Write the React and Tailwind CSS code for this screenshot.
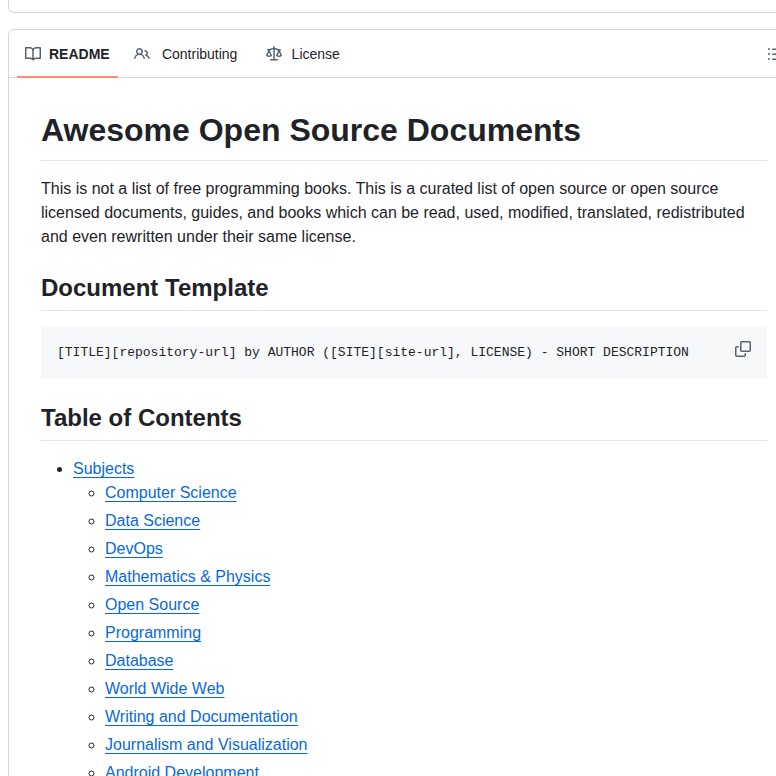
import React, { useState } from "react";
import clsx from "clsx";

const icons = {
  book: "M0 1.75A.75.75 0 0 1 .75 1h4.253c1.227 0 2.317.59 3 1.501A3.743 3.743 0 0 1 11.006 1h4.245a.75.75 0 0 1 .75.75v10.5a.75.75 0 0 1-.75.75h-4.507a2.25 2.25 0 0 0-1.591.659l-.622.621a.75.75 0 0 1-1.06 0l-.622-.621A2.25 2.25 0 0 0 5.258 13H.75a.75.75 0 0 1-.75-.75Zm7.251 10.324.004-5.073-.002-2.253A2.25 2.25 0 0 0 5.003 2.5H1.5v9h3.757a3.75 3.75 0 0 1 1.994.574ZM8.755 4.75l-.004 7.322a3.752 3.752 0 0 1 1.992-.572H14.5v-9h-3.495a2.25 2.25 0 0 0-2.25 2.25Z",
  people: "M2 5.5a3.5 3.5 0 1 1 5.898 2.549 5.508 5.508 0 0 1 3.034 4.084.75.75 0 1 1-1.482.235 4 4 0 0 0-7.9 0 .75.75 0 0 1-1.482-.236A5.507 5.507 0 0 1 3.102 8.05 3.493 3.493 0 0 1 2 5.5ZM11 4a3.001 3.001 0 0 1 2.22 5.018 5.01 5.01 0 0 1 2.56 3.012.749.749 0 0 1-.885.954.752.752 0 0 1-.549-.514 3.507 3.507 0 0 0-2.522-2.372.75.75 0 0 1-.574-.73v-.352a.75.75 0 0 1 .416-.672A1.5 1.5 0 0 0 11 5.5.75.75 0 0 1 11 4Zm-5.5-.5a2 2 0 1 0-.001 3.999A2 2 0 0 0 5.5 3.5Z",
  law: "M8.75.75V2h.985c.304 0 .603.08.867.231l1.29.736c.038.022.08.033.124.033h2.234a.75.75 0 0 1 0 1.5h-.427l2.111 4.692a.75.75 0 0 1-.154.838l-.53-.53.529.531-.001.002-.002.002-.006.006-.006.005-.01.01-.045.04c-.21.176-.441.327-.686.45C14.556 10.78 13.88 11 13 11a4.498 4.498 0 0 1-2.023-.454 3.544 3.544 0 0 1-.686-.45l-.045-.04-.016-.015-.006-.006-.004-.004v-.001a.75.75 0 0 1-.154-.838L12.178 4.5h-.162c-.305 0-.604-.079-.868-.231l-1.29-.736a.245.245 0 0 0-.124-.033H8.75V13h2.5a.75.75 0 0 1 0 1.5h-6.5a.75.75 0 0 1 0-1.5h2.5V3.5h-.984a.245.245 0 0 0-.124.033l-1.289.737c-.265.15-.564.23-.869.23h-.162l2.112 4.692a.75.75 0 0 1-.154.838l-.53-.53.529.531-.001.002-.002.002-.006.006-.016.015-.045.04c-.21.176-.441.327-.686.45C4.556 10.78 3.88 11 3 11a4.498 4.498 0 0 1-2.023-.454 3.544 3.544 0 0 1-.686-.45l-.045-.04-.016-.015-.006-.006-.004-.004v-.001a.75.75 0 0 1-.154-.838L2.178 4.5H1.75a.75.75 0 0 1 0-1.5h2.234a.249.249 0 0 0 .125-.033l1.288-.737c.265-.15.564-.23.869-.23h.984V.75a.75.75 0 0 1 1.5 0Zm2.945 8.477c.285.135.718.273 1.305.273s1.02-.138 1.305-.273L13 6.327Zm-10 0c.285.135.718.273 1.305.273s1.02-.138 1.305-.273L3 6.327Z",
  list: "M5.75 2.5h8.5a.75.75 0 0 1 0 1.5h-8.5a.75.75 0 0 1 0-1.5Zm0 5h8.5a.75.75 0 0 1 0 1.5h-8.5a.75.75 0 0 1 0-1.5Zm0 5h8.5a.75.75 0 0 1 0 1.5h-8.5a.75.75 0 0 1 0-1.5ZM2 14a1 1 0 1 1 0-2 1 1 0 0 1 0 2Zm1-6a1 1 0 1 1-2 0 1 1 0 0 1 2 0ZM2 4a1 1 0 1 1 0-2 1 1 0 0 1 0 2Z",
  copy: "M0 6.75C0 5.784.784 5 1.75 5h1.5a.75.75 0 0 1 0 1.5h-1.5a.25.25 0 0 0-.25.25v7.5c0 .138.112.25.25.25h7.5a.25.25 0 0 0 .25-.25v-1.5a.75.75 0 0 1 1.5 0v1.5A1.75 1.75 0 0 1 9.25 16h-7.5A1.75 1.75 0 0 1 0 14.25ZM5 1.75C5 .784 5.784 0 6.75 0h7.5C15.216 0 16 .784 16 1.75v7.5A1.75 1.75 0 0 1 14.25 11h-7.5A1.75 1.75 0 0 1 5 9.25Zm1.75-.25a.25.25 0 0 0-.25.25v7.5c0 .138.112.25.25.25h7.5a.25.25 0 0 0 .25-.25v-7.5a.25.25 0 0 0-.25-.25Z",
};

const tabs = [
  { label: "README", icon: "book" },
  { label: "Contributing", icon: "people" },
  { label: "License", icon: "law" },
];

const subjects = [
  "Computer Science",
  "Data Science",
  "DevOps",
  "Mathematics & Physics",
  "Open Source",
  "Programming",
  "Database",
  "World Wide Web",
  "Writing and Documentation",
  "Journalism and Visualization",
  "Android Development",
];

const template = "[TITLE][repository-url] by AUTHOR ([SITE][site-url], LICENSE) - SHORT DESCRIPTION";

function Icon({ name }) {
  return (
    <svg className="size-4 shrink-0 fill-[#59636e]" viewBox="0 0 16 16" aria-hidden="true">
      <path d={icons[name]} />
    </svg>
  );
}

function SectionHeading({ children }) {
  return (
    <h2 className="mt-6 mb-4 border-b border-[#d1d9e0]/70 pb-[7px] text-2xl/[30px] font-semibold">
      {children}
    </h2>
  );
}

function TocLink({ children }) {
  return (
    <a
      href={"#" + children.toLowerCase().replace(/[^a-z]+/g, "-")}
      className="text-[#0969da] underline underline-offset-[3px]"
    >
      {children}
    </a>
  );
}

function App() {
  const [active, setActive] = useState("README");

  return (
    <div className="overflow-hidden bg-white pl-2 font-['Liberation_Sans',Arial,sans-serif] text-base text-[#1f2328]">
      <div className="-mr-6 mb-4 h-[13px] rounded-b-md border border-t-0 border-[#d1d9e0]"></div>

      <div className="-mr-6 rounded-md border border-[#d1d9e0]">
        <div className="flex h-12 items-center justify-between border-b border-[#d1d9e0] px-2">
          <nav className="flex gap-2 self-stretch" aria-label="Repository files">
            {tabs.map((tab) => (
              <a
                key={tab.label}
                href={"#" + tab.label.toLowerCase()}
                onClick={() => setActive(tab.label)}
                className={clsx(
                  "-mb-px flex items-center gap-2 border-b-2 px-2 pt-[2px] text-sm",
                  active === tab.label ? "border-[#fd8c73] font-semibold" : "border-transparent"
                )}
              >
                <Icon name={tab.icon} />
                {/* the hidden bold copy keeps the tab width steady when it gets selected */}
                <span
                  data-label={tab.label}
                  className="text-center after:invisible after:block after:h-0 after:overflow-hidden after:font-semibold after:content-[attr(data-label)]"
                >
                  {tab.label}
                </span>
              </a>
            ))}
          </nav>
          <button type="button" aria-label="Outline" className="flex size-8 items-center justify-center">
            <Icon name="list" />
          </button>
        </div>

        <article className="p-8">
          <h1 className="mb-4 border-b border-[#d1d9e0]/70 pb-[10px] text-[32px]/10 font-semibold">
            Awesome Open Source Documents
          </h1>
          <p>
            This is not a list of free programming books. This is a curated list of open source or open source
            licensed documents, guides, and books which can be read, used, modified, translated, redistributed and
            even rewritten under their same license.
          </p>

          <SectionHeading>Document Template</SectionHeading>
          <div className="relative bg-[#f6f8fa]">
            <pre className="overflow-x-auto p-4 font-['Liberation_Mono',monospace] text-[13px]/5">{template}</pre>
            <button
              type="button"
              aria-label="Copy"
              onClick={() => navigator.clipboard.writeText(template)}
              className="absolute top-2 right-2 flex h-7 w-8 items-center justify-center"
            >
              <Icon name="copy" />
            </button>
          </div>

          <SectionHeading>Table of Contents</SectionHeading>
          <ul className="list-disc pl-8">
            <li>
              <TocLink>Subjects</TocLink>
              <ul className="list-[circle] space-y-1 pl-8">
                {subjects.map((subject) => (
                  <li key={subject}>
                    <TocLink>{subject}</TocLink>
                  </li>
                ))}
              </ul>
            </li>
          </ul>
        </article>
      </div>
    </div>
  );
}

export default App;
